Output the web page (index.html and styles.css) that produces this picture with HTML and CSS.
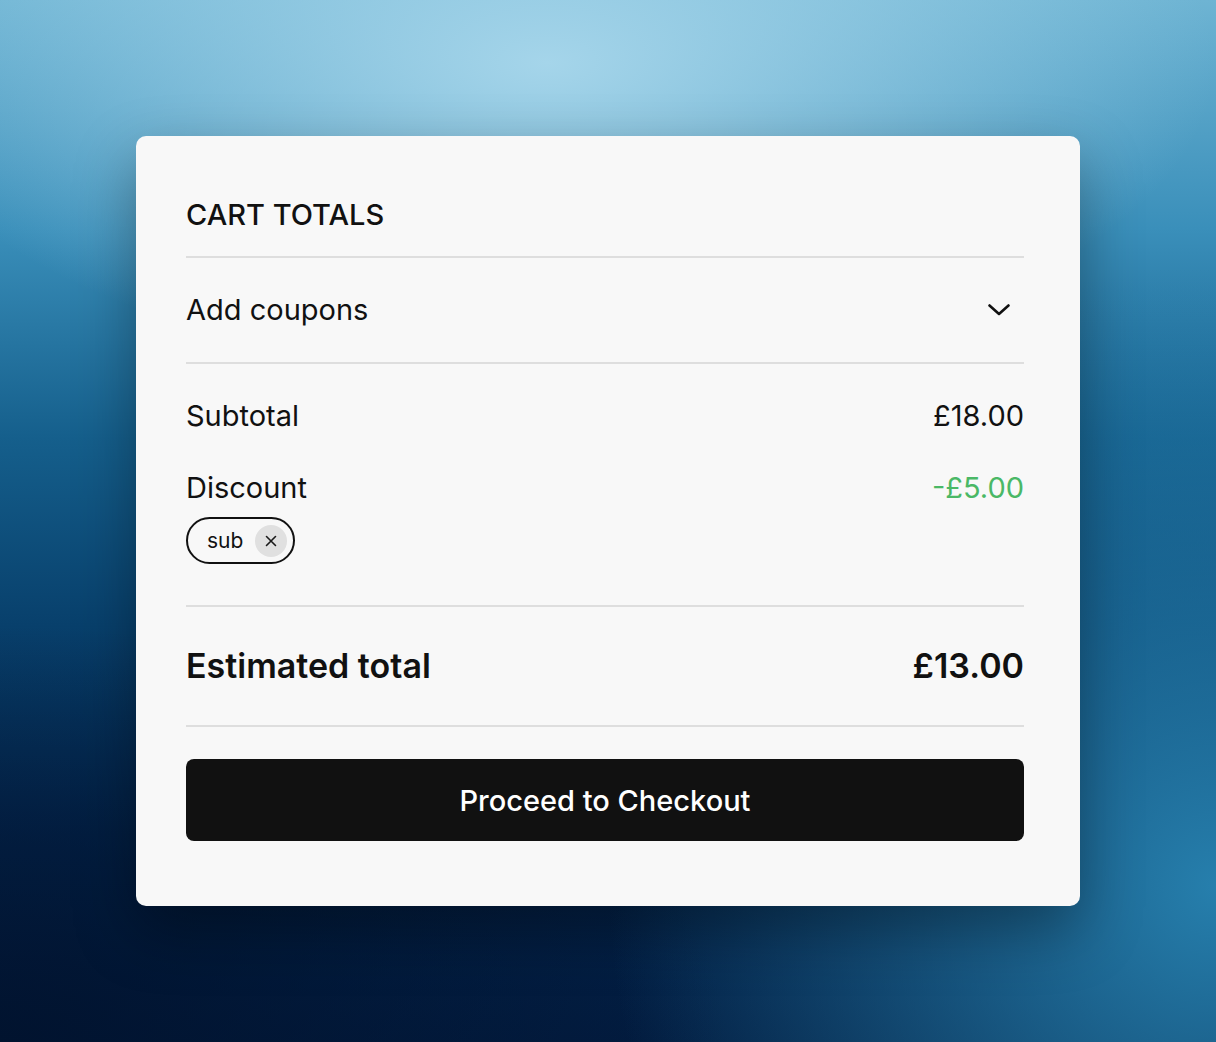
FILE: index.html
```html
<!DOCTYPE html>
<html lang="en">
<head>
    <meta charset="UTF-8">
    <meta name="viewport" content="width=device-width, initial-scale=1.0">
    <title>Cart Totals</title>
    <link rel="stylesheet" href="styles.css">
</head>
<body>
    <div class="card">
        <h2 class="card-title">CART TOTALS</h2>

        <div class="coupons">
            <span>Add coupons</span>
            <svg class="chevron" width="22" height="12" viewBox="0 0 22 12" aria-hidden="true">
                <polyline points="1.5,1.5 11,10 20.5,1.5" fill="none" stroke="#111" stroke-width="2.6" stroke-linecap="round" stroke-linejoin="round"/>
            </svg>
        </div>

        <div class="totals">
            <div class="row">
                <span>Subtotal</span>
                <span>£18.00</span>
            </div>
            <div class="row discount">
                <div>
                    <div>Discount</div>
                    <div class="chip">
                        <span>sub</span>
                        <button class="chip-remove" aria-label="Remove coupon">
                            <svg width="12" height="12" viewBox="0 0 12 12">
                                <path d="M1.5 1.5 L10.5 10.5 M10.5 1.5 L1.5 10.5" stroke="#1a1a1a" stroke-width="1.6" stroke-linecap="round"/>
                            </svg>
                        </button>
                    </div>
                </div>
                <span class="green">-£5.00</span>
            </div>
        </div>

        <div class="grand">
            <span>Estimated total</span>
            <span>£13.00</span>
        </div>

        <button class="checkout">Proceed to Checkout</button>
    </div>
</body>
</html>
```

FILE: styles.css
```css
/* Page background */
body {
    margin: 0;
    height: 100vh;
    font-family: Inter, "Noto Sans", sans-serif;
    color: #111;
    display: flex;
    justify-content: center;
    align-items: center;
    background:
        radial-gradient(ellipse 55% 30% at 45% 6%, rgba(165, 213, 234, 1) 0%, rgba(165, 213, 234, 0) 100%),
        radial-gradient(ellipse 50% 60% at 100% 85%, rgba(40, 132, 178, 0.95) 0%, rgba(40, 132, 178, 0) 100%),
        radial-gradient(ellipse 60% 40% at 0% 100%, rgba(1, 18, 45, 0.9) 0%, rgba(1, 18, 45, 0) 100%),
        linear-gradient(180deg, #6eb4d3 0%, #3a8fba 22%, #155f8c 42%, #08406c 60%, #03254d 80%, #021c40 100%);
}

.card {
    width: 944px;
    box-sizing: border-box;
    padding: 61px 56px 65px 50px;
    background-color: #f8f8f8;
    border-radius: 10px;
    box-shadow: 0 24px 60px rgba(0, 0, 0, 0.35);
}

.card-title {
    margin: 0;
    font-size: 29px;
    line-height: 35px;
    font-weight: 500;
    padding-bottom: 24px;
    border-bottom: 2px solid #dedede;
}

.coupons {
    display: flex;
    justify-content: space-between;
    align-items: center;
    font-size: 29px;
    line-height: 35px;
    padding: 34px 0 35px;
    border-bottom: 2px solid #dedede;
}

.chevron {
    margin-right: 14px;
}

.totals {
    padding: 34px 0 41px;
    border-bottom: 2px solid #dedede;
}

.row {
    display: flex;
    justify-content: space-between;
    align-items: flex-start;
    font-size: 29px;
    line-height: 35px;
}

.row.discount {
    margin-top: 37px;
}

.green {
    color: #4ab866;
}

.chip {
    display: inline-flex;
    align-items: center;
    gap: 12px;
    margin-top: 12px;
    height: 47px;
    box-sizing: border-box;
    padding: 0 6px 0 19px;
    border: 2px solid #111;
    border-radius: 24px;
    font-size: 21px;
    line-height: 24px;
}

.chip-remove {
    width: 32px;
    height: 32px;
    padding: 0;
    border: none;
    border-radius: 50%;
    background-color: #e0e0e0;
    display: flex;
    justify-content: center;
    align-items: center;
    cursor: pointer;
}

.grand {
    display: flex;
    justify-content: space-between;
    font-size: 34px;
    line-height: 41px;
    font-weight: 600;
    padding: 38px 0 39px;
    border-bottom: 2px solid #dedede;
}

.checkout {
    display: block;
    width: 100%;
    height: 82px;
    margin-top: 32px;
    border: none;
    border-radius: 8px;
    background-color: #111;
    color: #fff;
    font-family: Inter, "Noto Sans", sans-serif;
    font-size: 29px;
    font-weight: 500;
    cursor: pointer;
}
```
